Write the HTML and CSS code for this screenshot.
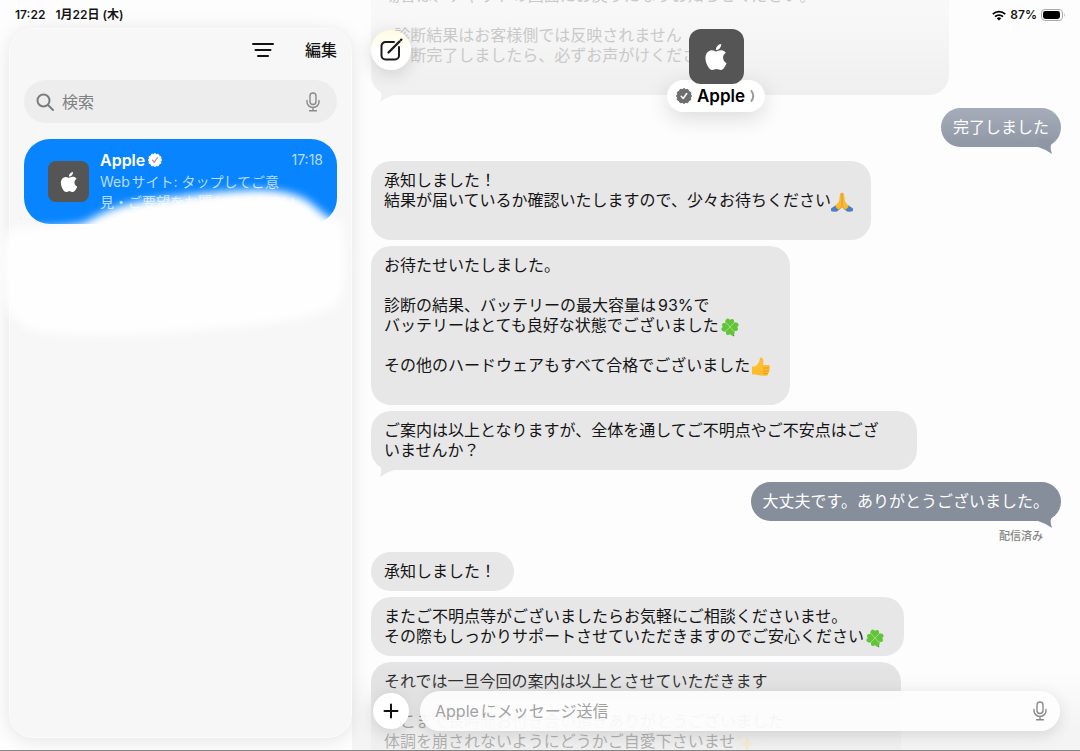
FILE: index.html
```
<!DOCTYPE html>
<html lang="ja">
<head>
  <meta charset="UTF-8" />
  <meta name="viewport" content="width=device-width, initial-scale=1.0"/>
  <title>メッセージ</title>
  <link rel="stylesheet" href="styles.css">
</head>
<body>
  <svg class="sprite" aria-hidden="true">
    <symbol id="apple" viewBox="0 0 24 24">
      <path d="M12.152 6.896c-.948 0-2.415-1.078-3.96-1.04-2.04.027-3.91 1.183-4.961 3.014-2.117 3.675-.546 9.103 1.519 12.09 1.013 1.454 2.208 3.09 3.792 3.039 1.52-.065 2.09-.987 3.935-.987 1.831 0 2.35.987 3.96.948 1.637-.026 2.676-1.48 3.676-2.948 1.156-1.688 1.636-3.325 1.662-3.415-.039-.013-3.182-1.221-3.22-4.857-.026-3.04 2.48-4.494 2.597-4.559-1.429-2.09-3.623-2.324-4.39-2.376-2-.156-3.675 1.09-4.61 1.09zM15.53 3.83c.843-1.012 1.4-2.427 1.245-3.83-1.207.052-2.662.805-3.532 1.818-.78.896-1.454 2.338-1.273 3.714 1.338.104 2.715-.688 3.559-1.701" fill="#fff"/>
    </symbol>
    <symbol id="badge" viewBox="0 0 16 16">
      <path d="M8 .5l1.8 1.3 2.2-.2.9 2 2 .9-.2 2.2L15.500 8l-1 1.600.2 2.200-2 .9-.9 2-2.200-.2L8 15.500l-1.700-1-2.200.2-.9-2-2-.9.2-2.200L.5 8l1-1.600-.2-2.200 2-.9.9-2 2.200.2z" fill="currentColor" stroke="currentColor" stroke-linejoin="round"/>
      <path d="M5.200 8.300l2 2.200 3.500-5" fill="none" stroke="var(--check)" stroke-width="1.500" stroke-linecap="round" stroke-linejoin="round"/>
    </symbol>
    <symbol id="mic" viewBox="0 0 16 20">
      <g fill="none" stroke="currentColor" stroke-width="1.400" stroke-linecap="round">
        <rect x="5" y="1" width="6" height="11.500" rx="3"/>
        <path d="M2 8.500v1.500a6 5.500 0 0 0 12 0V8.500M8 15.500v3M4.500 18.700h7"/>
      </g>
    </symbol>
    <symbol id="clover" viewBox="0 0 20 20">
      <path d="M10 10q1 5 3.500 8.500" fill="none" stroke="#3f9a2c" stroke-width="1.600" stroke-linecap="round"/>
      <g fill="#62c43c">
        <path d="M10 10C5 9.500 4.500 5 6 2.500 7.500.5 9.500 1.500 10 3c1-1.500 3.500-1.500 4 .5C14.500 6 12.500 8.500 10 10z"/>
        <path d="M10 10c.5-5 5-5.500 7.500-4 2 1.500 1 3.500-.5 4 1.500 1 1.500 3.500-.5 4-2.500.5-5-1.500-6.500-4z"/>
        <path d="M10 10c5 .5 5.500 5 4 7.500-1.500 1.500-3.500 1-4-.5-1 1.500-3.500 1.500-4-.5-.5-2.500 1.500-5 4-6.500z"/>
        <path d="M10 10c-.5 5-5 5.500-7.500 4-2-1.500-1-3.500.5-4-1.500-1-1.500-3.500.5-4 2.500-.5 5 1.500 6.500 4z"/>
      </g>
      <path d="M6 5.500l8 9M14.500 5.500l-9 9" stroke="#a5e07c" stroke-width=".9" stroke-linecap="round"/>
    </symbol>
    <symbol id="pray" viewBox="0 0 22 20">
      <path d="M0 16.500l5-3.500 4 4-3 2.500q-4 .5-6-.5zM22 16.500L17 13l-4 4 3 2.500q4 .5 6-.5z" fill="#4d7fc4"/>
      <path d="M10.800.8C9.200.8 9 2 8.800 4L8 9.500 4.200 14q1 2.500 4 4L10.800 15zM11.200.8C12.800.8 13 2 13.200 4l.8 5.500 3.800 4.500q-1 2.500-4 4L11.200 15z" fill="#fbb92e"/>
      <path d="M11 1v13.500M10.800 14.500l-2.500 3M11.200 14.500l2.500 3" stroke="#d98a1c" stroke-width=".9" fill="none"/>
    </symbol>
    <symbol id="thumb" viewBox="0 0 20 20">
      <path d="M1 9.500q3 .5 5-1.500 2.500-2.500 3-6.500.3-1.200 1.600-.8 2 .8 1.800 3.300L12 8h5.500q1.700.2 1.600 1.700-.1 1-1 1.300 1 .5.8 1.700-.3 1.100-1.300 1.200.8.6.5 1.600-.3.900-1.300 1 .4.600.1 1.300-.4.900-1.600.9-5 .4-8.500-.7-2-.8-5.800-.5z" fill="#fdbd2d"/>
      <path d="M12.500 11h5M12.500 14h5M12.500 16.600h4" stroke="#e2931b" stroke-width=".9" stroke-linecap="round"/>
    </symbol>
    <symbol id="sparkles" viewBox="0 0 20 20">
      <path d="M11 3l2 6 5 2-5 2-2 6-2-6-5-2 5-2zM4 1l1 3 2 1-2 1-1 3-1-3-2-1 2-1z" fill="#fbdf86"/>
    </symbol>
  </svg>

  <div class="app">
    <div class="status-bar">
      <div class="status-left">
        <span>17:22</span>
        <span>1月22日 (木)</span>
      </div>
      <div class="status-right">
        <svg width="14" height="11" viewBox="0 0 14 11" aria-label="Wi-Fi">
          <g fill="none" stroke="#000" stroke-width="1.800">
            <path d="M.8 4.200a9 9 0 0 1 12.400 0"/>
            <path d="M3 6.700a5.800 5.800 0 0 1 8 0"/>
          </g>
          <path d="M7 10.600L4.800 8.400a3.200 3.200 0 0 1 4.400 0z"/>
        </svg>
        <span>87%</span>
        <svg width="25" height="12" viewBox="0 0 25 12" aria-label="バッテリー">
          <rect x=".5" y=".5" width="21" height="11" rx="3.500" fill="none" stroke="#aaa"/>
          <rect x="2" y="2" width="17" height="8" rx="2.400"/>
          <path d="M23 4q1.500 2 0 4z" fill="#aaa"/>
        </svg>
      </div>
    </div>

    <aside class="sidebar">
      <div class="toolbar">
        <button class="icon-button" aria-label="フィルタ">
          <svg width="24" height="16" viewBox="0 0 24 16" fill="none" stroke="#111" stroke-width="2" stroke-linecap="round">
            <path d="M2 2h20M4.500 8h15M7 14h10"/>
          </svg>
        </button>
        <button class="edit-button">編集</button>
      </div>
      <label class="search">
        <svg width="18" height="18" viewBox="0 0 18 18" fill="none" stroke="#7b7b7b" stroke-width="2" stroke-linecap="round">
          <circle cx="7.500" cy="7.500" r="6"/>
          <path d="M12 12l5 5"/>
        </svg>
        <input type="search" placeholder="検索" aria-label="検索">
        <svg class="mic" width="16" height="20"><use href="#mic"/></svg>
      </label>
      <div class="conversation">
        <div class="avatar avatar-small">
          <svg width="20" height="20"><use href="#apple"/></svg>
        </div>
        <div class="summary">
          <div class="summary-head">
            <strong>Apple</strong>
            <svg class="badge-light" width="14" height="14"><use href="#badge"/></svg>
            <time>17:18</time>
          </div>
          <p>Webサイト: タップしてご意<br>見・ご要望をお聞かせください</p>
        </div>
      </div>
      <svg class="cover" width="360" height="180" viewBox="0 0 360 180" aria-hidden="true">
        <defs>
          <filter id="soft" x="-10%" y="-10%" width="120%" height="120%"><feGaussianBlur stdDeviation="4"/></filter>
        </defs>
        <path d="M14 54C50 53 70 53 86 48 105 36 125 29 150 26 180 22 210 18 250 16 280 15 300 20 312 30 322 38 328 46 342 48 348 90 346 115 336 132 300 148 250 152 200 156 150 161 90 164 40 158 15 150 5 138 4 116 2 90 0 60 14 54z" fill="#fefefe" filter="url(#soft)"/>
      </svg>
    </aside>

    <main class="chat">
      <div class="messages">
        <div class="bubble received faded tail">場合は、チャットの画面にお戻りになりお知らせください。<br><br>※診断結果はお客様側では反映されません<br>※診断完了しましたら、必ずお声がけください<br><br></div>
        <div class="bubble sent sent-light tail">完了しました</div>
        <div class="bubble received">承知しました！<br>結果が届いているか確認いたしますので、少々お待ちください<svg class="emoji" role="img" aria-label="🙏"><use href="#pray"/></svg><br><br></div>
        <div class="bubble received">お待たせいたしました。<br><br>診断の結果、バッテリーの最大容量は93%で<br>バッテリーはとても良好な状態でございました<svg class="emoji" role="img" aria-label="🍀"><use href="#clover"/></svg><br><br>その他のハードウェアもすべて合格でございました<svg class="emoji" role="img" aria-label="👍"><use href="#thumb"/></svg><br><br></div>
        <div class="bubble received wide tail">ご案内は以上となりますが、全体を通してご不明点やご不安点はござ<br>いませんか？</div>
        <div class="bubble sent tail">大丈夫です。ありがとうございました。</div>
        <div class="delivered">配信済み</div>
        <div class="bubble received">承知しました！</div>
        <div class="bubble received">またご不明点等がございましたらお気軽にご相談くださいませ。<br>その際もしっかりサポートさせていただきますのでご安心ください<svg class="emoji" role="img" aria-label="🍀"><use href="#clover"/></svg></div>
        <div class="bubble received last">それでは一旦今回の案内は以上とさせていただきます<br><br>ここまで長時間お付き合い頂きありがとうございました<br>体調を崩されないようにどうかご自愛下さいませ<svg class="emoji" role="img" aria-label="✨"><use href="#sparkles"/></svg><br><br></div>
      </div>

      <button class="round-button compose" aria-label="新規メッセージ">
        <svg width="24" height="24" viewBox="0 0 24 24" fill="none" stroke="#1b1b1b" stroke-width="2" stroke-linecap="round" stroke-linejoin="round">
          <path d="M15 4H6.500A4 4 0 0 0 2.500 8v9.500a4 4 0 0 0 4 4H16a4 4 0 0 0 4-4V9"/>
          <path d="M9.500 14.500L20.500 3.500" stroke-width="2.400"/>
          <path d="M22 2l.3-.3" stroke-width="2.400"/>
        </svg>
      </button>

      <div class="contact">
        <div class="avatar avatar-large">
          <svg width="26" height="26"><use href="#apple"/></svg>
        </div>
        <button class="contact-name">
          <svg class="badge-dark" width="16" height="16"><use href="#badge"/></svg>
          Apple
          <svg width="6" height="12" viewBox="0 0 6 12" fill="none" stroke="#999" stroke-width="2" stroke-linecap="round"><path d="M1.500 1q3.500 5 0 10"/></svg>
        </button>
      </div>

      <form class="composer">
        <button class="round-button plus" type="button" aria-label="追加">
          <svg width="16" height="16" viewBox="0 0 16 16" stroke="#111" stroke-width="2" stroke-linecap="round"><path d="M8 1.500v13M1.500 8h13"/></svg>
        </button>
        <label class="message-field">
          <input type="text" placeholder="Appleにメッセージ送信" aria-label="Appleにメッセージ送信">
          <svg class="mic" width="16" height="20"><use href="#mic"/></svg>
        </label>
      </form>
    </main>
  </div>
</body>
</html>
```

FILE: styles.css
```
* {
  box-sizing: border-box;
}

body {
  margin: 0;
  font-family: Inter, "Noto Sans CJK JP", sans-serif;
  font-size: 16px;
  line-height: 20px;
  color: #151515;
  text-autospace: normal;
}

button,
input {
  font: inherit;
  color: inherit;
  border: none;
  background: none;
  padding: 0;
}

button {
  cursor: pointer;
}

svg {
  flex: none;
}

.sprite {
  position: absolute;
  width: 0;
  height: 0;
}

.app {
  position: relative;
  display: flex;
  height: 100vh;
  overflow: hidden;
  background: #fdfdfd;
  border-bottom: 1px solid #858585;
}

/* status bar */
.status-bar {
  position: absolute;
  z-index: 3;
  top: 5px;
  left: 15px;
  right: 14px;
  display: flex;
  justify-content: space-between;
  font-size: 12px;
  font-weight: 600;
  text-autospace: no-autospace;
}

.status-left {
  display: flex;
  gap: 10px;
}

.status-right {
  display: flex;
  align-items: center;
  gap: 4px;
}

/* sidebar */
.sidebar {
  position: relative;
  z-index: 1;
  flex: 0 0 343px;
  min-width: 0;
  margin: 28px 0 12px 9px;
  padding: 0 14px;
  border: 1px solid #fcfcfc;
  border-radius: 24px;
  background: #f7f7f7;
  box-shadow: 0 2px 18px rgba(0, 0, 0, 0.1);
}

.toolbar {
  display: flex;
  align-items: center;
  justify-content: flex-end;
  gap: 30px;
  height: 42px;
}

.icon-button {
  display: flex;
}

.edit-button {
  font-weight: 500;
}

.search {
  display: flex;
  align-items: center;
  gap: 8px;
  height: 43px;
  margin-top: 9px;
  padding: 0 16px 0 12px;
  border-radius: 22px;
  background: #ededed;
}

.search input,
.message-field input {
  flex: 1;
  width: 100%;
  min-width: 0;
  outline: none;
}

.search input::placeholder {
  color: #808080;
  opacity: 1;
}

.mic {
  color: #8a8a8a;
}

.conversation {
  display: flex;
  align-items: center;
  gap: 11px;
  height: 85px;
  margin-top: 16px;
  padding: 0 14px 0 24px;
  border-radius: 26px;
  background: #0784fe;
  color: #fff;
}

.avatar {
  display: flex;
  align-items: center;
  justify-content: center;
  background: #555;
}

.avatar-small {
  flex: none;
  width: 41px;
  height: 41px;
  border-radius: 8px;
}

.summary {
  flex: 1;
  min-width: 0;
  height: 64px;
  overflow: hidden;
}

.summary-head {
  display: flex;
  align-items: center;
  gap: 3px;
}

.summary-head strong {
  font-weight: 600;
}

.summary-head time {
  margin-left: auto;
  font-size: 14px;
  color: #b9dcff;
}

.summary p {
  margin: 2px 0 0;
  font-size: 14px;
  white-space: nowrap;
  color: #b9dcff;
}

.badge-light {
  color: #fff;
  --check: #d78a93;
}

.badge-dark {
  color: #6d6d6d;
  --check: #fff;
}

.cover {
  position: absolute;
  top: 145px;
  left: -10px;
}

/* chat */
.chat {
  position: relative;
  flex: 1;
  min-width: 0;
}

.messages {
  display: flex;
  flex-direction: column;
  align-items: flex-start;
  gap: 6px;
  height: 100%;
  padding: 0 19px;
  overflow: hidden;
}

.bubble {
  position: relative;
  flex: none;
  padding: 9px 18px 10px 13px;
  border-radius: 20px;
  background: #e7e7e7;
}

.sent {
  align-self: flex-end;
  margin-top: 6px;
  padding: 9px 12px 10px;
  background: #868e9c;
  color: #fff;
}

.sent-light {
  margin: 7px 0 8px;
  background: linear-gradient(#a6acba, #8f97a4);
}

.tail::after {
  content: "";
  position: absolute;
  bottom: -7px;
  width: 16px;
  height: 16px;
  background: #e7e7e7;
}

.received.tail::after {
  left: 7px;
  clip-path: path("M16 9Q9 11 2 16Q5 8 1 2L16 0Z");
}

.sent.tail::after {
  right: 7px;
  background: #868e9c;
  clip-path: path("M0 9Q7 11 14 16Q11 8 15 2L0 0Z");
}

.sent-light.tail::after {
  background: #8f97a4;
}

.faded {
  width: 578px;
  margin-top: -24px;
  background: linear-gradient(#f8f8f8 30%, #efefef);
  color: #c9c9c9;
}

.faded.tail::after {
  background: #f0f0f0;
}

.wide {
  min-width: 546px;
}

.last {
  min-width: 530px;
  background: linear-gradient(#e5e5e7, #dedede 30px, #f0f0f0 90px);
}

.emoji {
  width: 22px;
  height: 20px;
  vertical-align: -3px;
  margin: -3px 0;
}

.delivered {
  align-self: flex-end;
  margin: -1px 18px 0 0;
  font-size: 11px;
  font-weight: 500;
  color: #858585;
}

.round-button {
  display: flex;
  align-items: center;
  justify-content: center;
  flex: none;
  border-radius: 50%;
  background: #fff;
  box-shadow: 0 4px 18px rgba(0, 0, 0, 0.14);
}

.compose {
  position: absolute;
  top: 30px;
  left: 19px;
  width: 40px;
  height: 40px;
  background: linear-gradient(#fffbe0, #fff 50%);
}

.contact {
  position: absolute;
  top: 29px;
  left: 0;
  right: 0;
  display: flex;
  flex-direction: column;
  align-items: center;
  pointer-events: none;
}

.avatar-large {
  position: relative;
  z-index: 1;
  width: 55px;
  height: 55px;
  border-radius: 12px;
}

.contact-name {
  display: flex;
  align-items: center;
  gap: 5px;
  height: 32px;
  margin-top: -4px;
  padding: 0 9px;
  border-radius: 16px;
  background: #fff;
  font-size: 17px;
  font-weight: 600;
  color: #000;
  box-shadow: 0 6px 22px rgba(0, 0, 0, 0.14);
}

.composer {
  position: absolute;
  left: 0;
  right: 0;
  bottom: 0;
  display: flex;
  align-items: center;
  gap: 11px;
  padding: 21px 20px 19px 21px;
  background: linear-gradient(rgba(250, 250, 250, 0), rgba(240, 240, 240, 0.7) 75%);
}

.plus {
  width: 36px;
  height: 36px;
}

.message-field {
  flex: 1;
  display: flex;
  align-items: center;
  height: 40px;
  padding: 0 12px 0 15px;
  border-radius: 20px;
  background: rgba(253, 253, 253, 0.93);
  box-shadow: 0 4px 16px rgba(0, 0, 0, 0.12);
}

.message-field input::placeholder {
  color: #a2a2a2;
  opacity: 1;
}
```
